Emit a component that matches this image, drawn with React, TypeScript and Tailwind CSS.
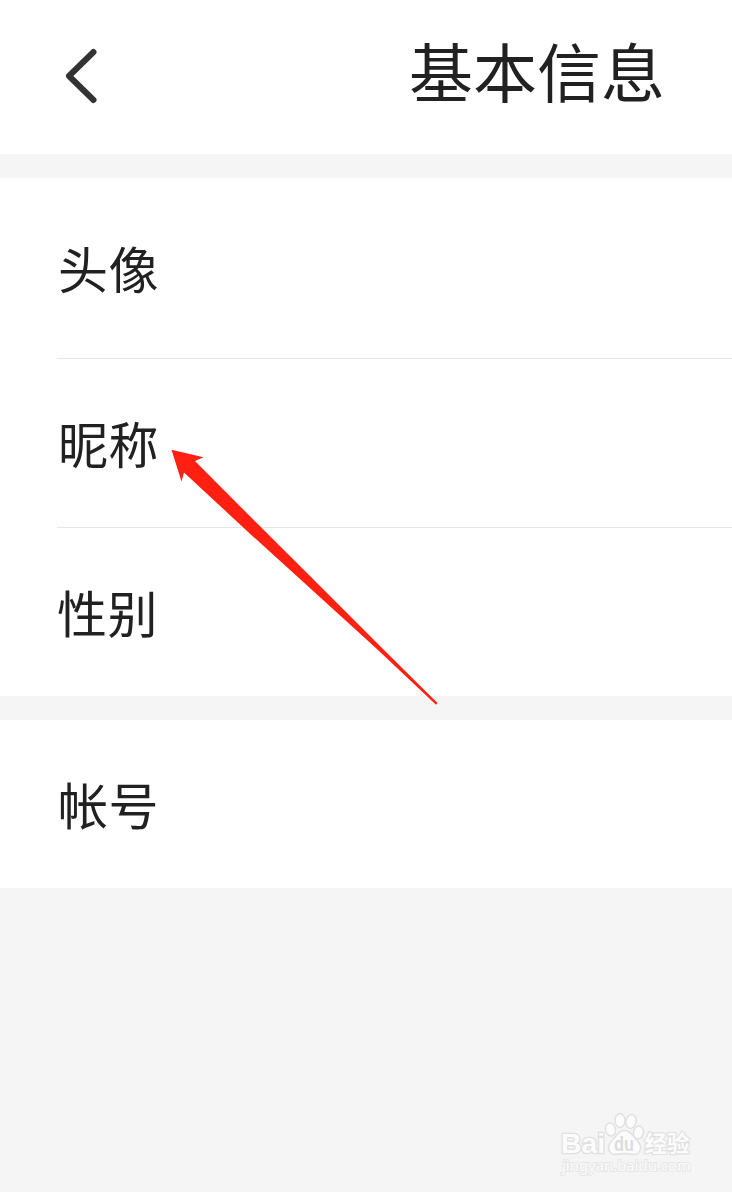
const rowText = "text-[50px] leading-[60px] tracking-[0.5px] text-[#212121]";

function Watermark() {
  return (
    <svg className="absolute left-[550px] top-[1100px]" width="160" height="92" viewBox="0 0 160 92" fill="#fcfcfc" stroke="#e0e0e0" strokeWidth="1.4">
      <text x="11" y="53" fontSize="28.500" fontFamily="Liberation Sans, sans-serif" fontWeight="700" textLength="44" lengthAdjust="spacingAndGlyphs" strokeWidth="2.6" paintOrder="stroke">Bai</text>
      <ellipse cx="60.5" cy="29.5" rx="5" ry="6.5" transform="rotate(-15 60.5 29.5)" />
      <ellipse cx="70" cy="20.5" rx="5" ry="7" />
      <ellipse cx="81" cy="21.5" rx="5" ry="7" transform="rotate(12 81 21.5)" />
      <ellipse cx="88.5" cy="32.5" rx="5" ry="6.5" transform="rotate(15 88.5 32.5)" />
      <path d="M74.5 30.5C69 30.5 67 35 64 38.5C61 41.5 58.500 43.500 58.500 48C58.500 52 62 54.500 66 54.500C69 54.500 71 53.500 75 53.500C79 53.500 81 54.500 84 54.500C88 54.500 90.500 51.500 90.500 47.500C90.500 43.500 88 41.500 85.500 38.500C82 34.500 80 30.500 74.500 30.500Z" />
      <text x="64" y="50.500" fontSize="20" fontFamily="Liberation Sans, sans-serif" fontWeight="700" fill="#dcdcdc" stroke="none" textLength="20" lengthAdjust="spacingAndGlyphs">du</text>
      <text x="94.500" y="51.500" fontSize="23" fontFamily="Noto Sans CJK SC, sans-serif" fontWeight="700" strokeWidth="2.2" paintOrder="stroke" textLength="45" lengthAdjust="spacingAndGlyphs">经验</text>
      <text x="12" y="71" fontSize="14" fontFamily="Noto Sans, sans-serif" strokeWidth="1.800" stroke="#e6e6e6" paintOrder="stroke" textLength="129" lengthAdjust="spacingAndGlyphs">jingyan.baidu.com</text>
    </svg>
  );
}

export default function App() {
  return (
    <div className="relative flex h-[1192px] w-[732px] flex-col overflow-hidden bg-[#f5f5f5] font-['Noto_Sans_CJK_SC',sans-serif]">
      <header className="flex h-[154px] shrink-0 items-start justify-between bg-white pl-[60px] pr-[67px]">
        <svg className="mt-[42px]" width="44" height="68" viewBox="0 0 44 68" fill="none" stroke="#333333" strokeWidth="6" strokeLinecap="round" strokeLinejoin="round">
          <path d="M33.500 10L9 34L33.500 58" />
        </svg>
        <h1 className="mt-[29px] text-[64px] leading-[80px] text-[#212121]">基本信息</h1>
      </header>
      <section className="mt-6 h-[518px] shrink-0 bg-white pl-[57px]">
        <div className="h-[181px] border-b border-[#e6e6e6] pt-[59px]">
          <p className={`${rowText} pl-px`}>头像</p>
        </div>
        <div className="h-[169px] border-b border-[#e6e6e6] pt-[53px]">
          <p className={`${rowText} pl-px`}>昵称</p>
        </div>
        <div className="h-[168px] pt-[53px]">
          <p className={rowText}>性别</p>
        </div>
      </section>
      <section className="mt-6 h-[168px] shrink-0 bg-white pl-[58px] pt-[53px]">
        <p className={rowText}>帐号</p>
      </section>
      <svg className="absolute left-[160px] top-[440px]" width="290" height="275" viewBox="0 0 290 275" fill="#ff2012">
        <path d="M11.500 9.800L43.500 17.200L35 21L90 76.300L140 126L224 210L277.500 263L276 264.800L218 210L140 139L90 93.700L24 32.500L21.500 41.500Z" />
      </svg>
      <Watermark />
    </div>
  );
}
